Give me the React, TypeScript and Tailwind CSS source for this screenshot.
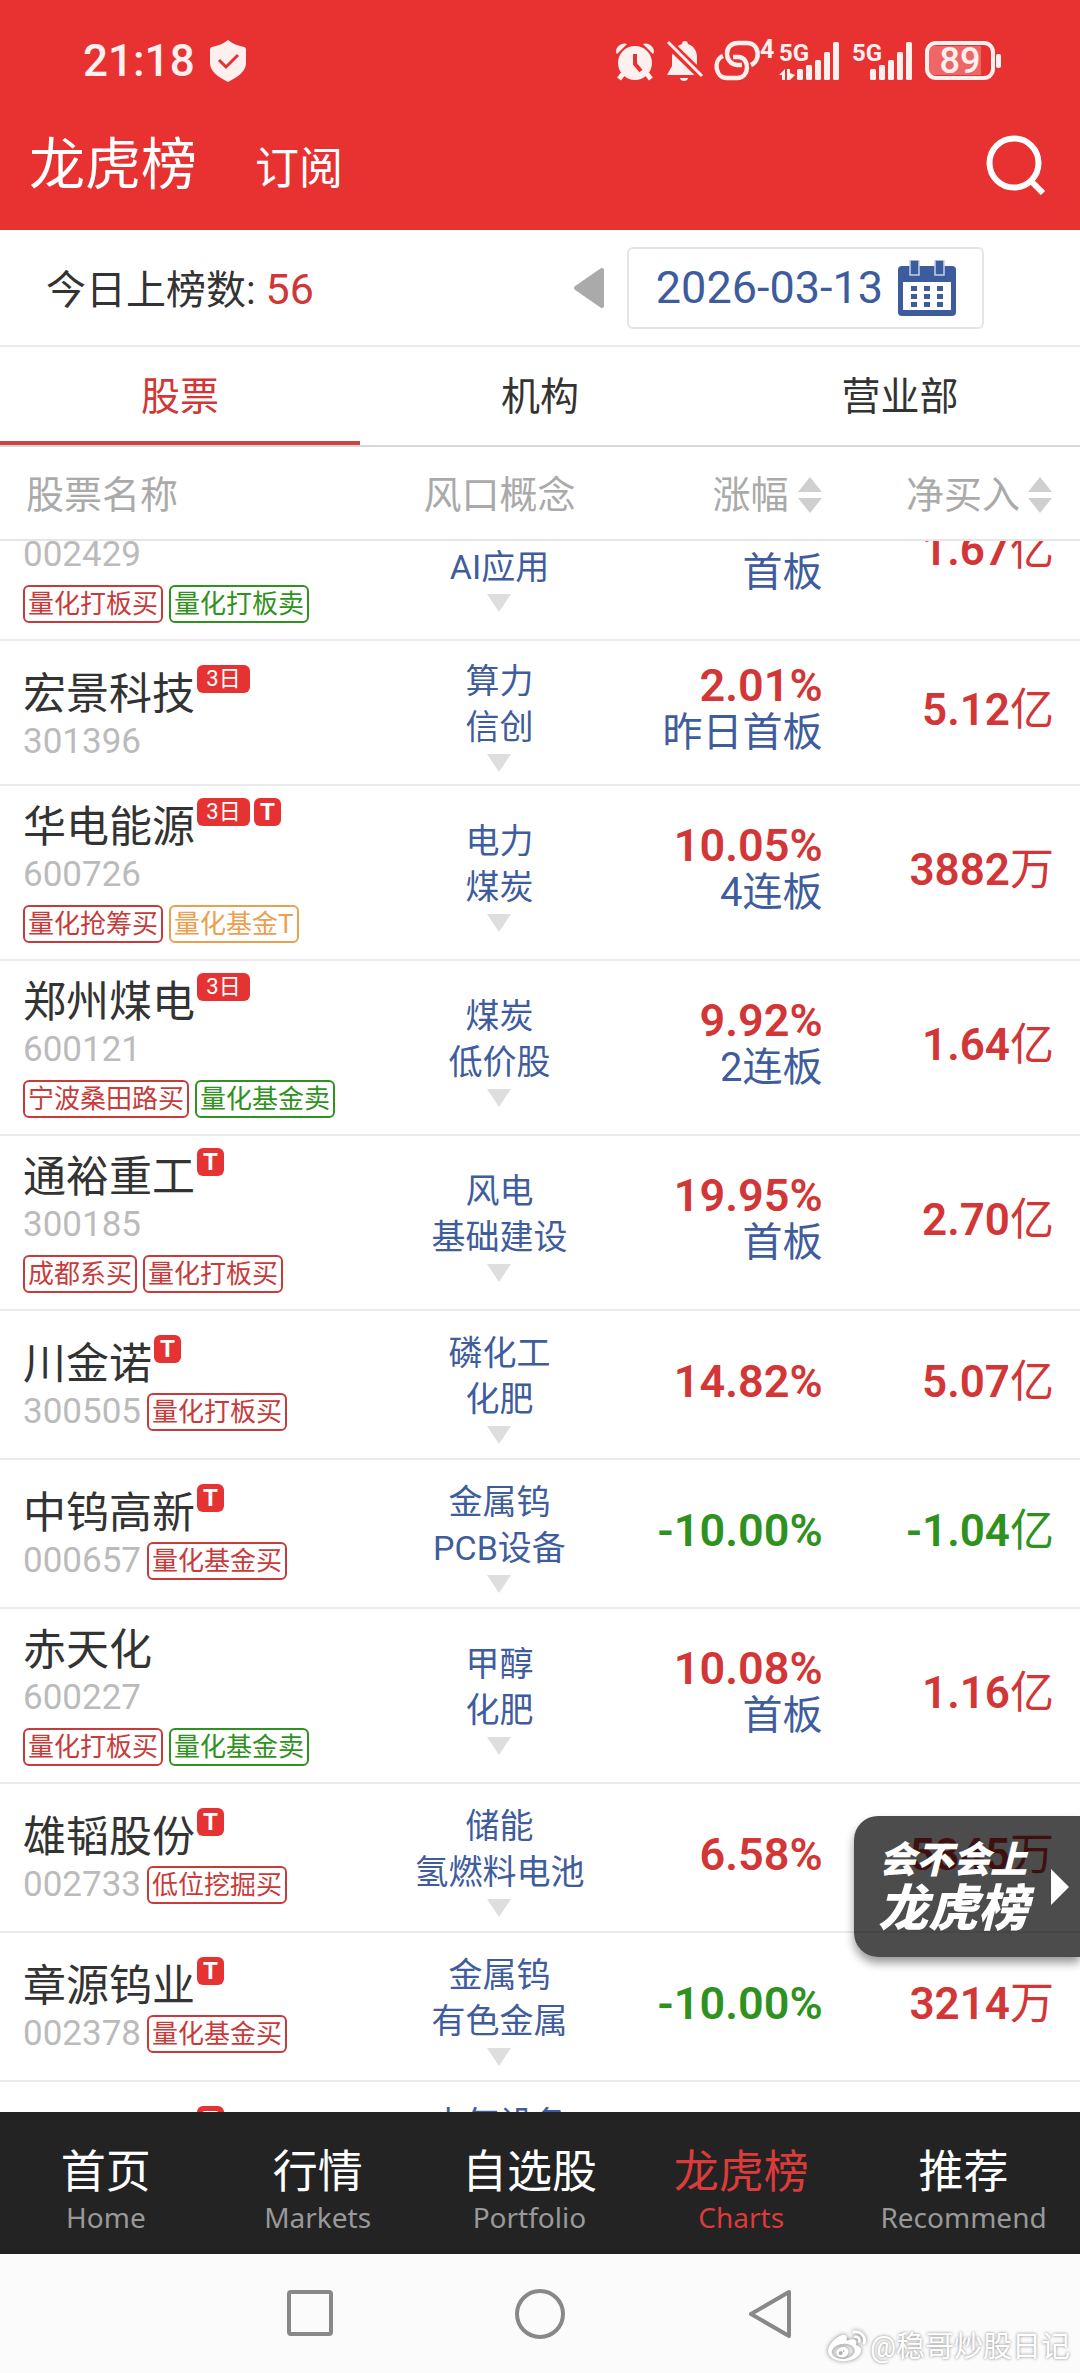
import { useLayoutEffect, useRef, useState } from "react";
import { FaWeibo } from "react-icons/fa";

type Tone = "red" | "green" | "orange";
type Layout = "stacked" | "inline" | "single";

interface Tag {
  text: string;
  tone: Tone;
}

interface Stock {
  name: string;
  code: string;
  badges?: string[];
  tags?: Tag[];
  layout: Layout;
  concepts: string[];
  change: string;
  streak?: string;
  net: [string, string];
}

const red = (text: string): Tag => ({ text, tone: "red" });
const green = (text: string): Tag => ({ text, tone: "green" });
const orange = (text: string): Tag => ({ text, tone: "orange" });

const STOCKS: Stock[] = [
  { name: "兆驰股份", code: "002429", tags: [red("量化打板买"), green("量化打板卖")], layout: "stacked", concepts: ["算力", "AI应用"], change: "10.03%", streak: "首板", net: ["1.67", "亿"] },
  { name: "宏景科技", code: "301396", badges: ["3日"], layout: "single", concepts: ["算力", "信创"], change: "2.01%", streak: "昨日首板", net: ["5.12", "亿"] },
  { name: "华电能源", code: "600726", badges: ["3日", "T"], tags: [red("量化抢筹买"), orange("量化基金T")], layout: "stacked", concepts: ["电力", "煤炭"], change: "10.05%", streak: "4连板", net: ["3882", "万"] },
  { name: "郑州煤电", code: "600121", badges: ["3日"], tags: [red("宁波桑田路买"), green("量化基金卖")], layout: "stacked", concepts: ["煤炭", "低价股"], change: "9.92%", streak: "2连板", net: ["1.64", "亿"] },
  { name: "通裕重工", code: "300185", badges: ["T"], tags: [red("成都系买"), red("量化打板买")], layout: "stacked", concepts: ["风电", "基础建设"], change: "19.95%", streak: "首板", net: ["2.70", "亿"] },
  { name: "川金诺", code: "300505", badges: ["T"], tags: [red("量化打板买")], layout: "inline", concepts: ["磷化工", "化肥"], change: "14.82%", net: ["5.07", "亿"] },
  { name: "中钨高新", code: "000657", badges: ["T"], tags: [red("量化基金买")], layout: "inline", concepts: ["金属钨", "PCB设备"], change: "-10.00%", net: ["-1.04", "亿"] },
  { name: "赤天化", code: "600227", tags: [red("量化打板买"), green("量化基金卖")], layout: "stacked", concepts: ["甲醇", "化肥"], change: "10.08%", streak: "首板", net: ["1.16", "亿"] },
  { name: "雄韬股份", code: "002733", badges: ["T"], tags: [red("低位挖掘买")], layout: "inline", concepts: ["储能", "氢燃料电池"], change: "6.58%", net: ["5845", "万"] },
  { name: "章源钨业", code: "002378", badges: ["T"], tags: [red("量化基金买")], layout: "inline", concepts: ["金属钨", "有色金属"], change: "-10.00%", net: ["3214", "万"] },
  { name: "三变科技", code: "002112", badges: ["T"], tags: [red("量化基金买")], layout: "inline", concepts: ["电气设备", "储能"], change: "10.00%", net: ["1.02", "亿"] },
];

const TONES: Record<Tone, string> = {
  red: "border-[#c93a3a] text-[#c93a3a]",
  green: "border-[#2f9220] text-[#2f9220]",
  orange: "border-[#eb9f4f] text-[#eb9f4f]",
};

const NAME_CELL: Record<Layout, string> = {
  stacked: "pt-3 pb-4",
  inline: "pt-6 pb-6",
  single: "pt-6 pb-5",
};

const NAV = [
  { zh: "首页", en: "Home" },
  { zh: "行情", en: "Markets" },
  { zh: "自选股", en: "Portfolio" },
  { zh: "龙虎榜", en: "Charts" },
  { zh: "推荐", en: "Recommend" },
];

const SCROLLED = 75;

function Signal({ data }: { data: boolean }) {
  return (
    <svg className="overflow-visible" width="62" height="40" viewBox="0 0 62 40" fill="currentColor" aria-hidden="true">
      <text x="0" y="20" fontSize="24" fontWeight="700" fontFamily="Roboto, sans-serif">5G</text>
      {data && <path d="M0 34l6-6v11H3v-5zM8 28h3v4l5 2-5 5H8z" />}
      {[[18, 28], [27, 24], [36, 19], [45, 11], [54, 1]].map(([x, y]) => (
        <rect key={x} x={x} y={y} width="6" height={39 - y} rx="1.5" />
      ))}
    </svg>
  );
}

function StatusBar() {
  return (
    <div className="flex h-[82px] items-end justify-between pr-[79px] pl-[83px] text-[#fff0f0]">
      <div className="flex items-center gap-[14px]">
        <span className="text-[44px] leading-10 font-medium">21:18</span>
        <svg width="38" height="42" viewBox="0 0 38 42" aria-hidden="true">
          <path d="M19 0c5 4 11 6 16 7 1 0 2 1 2 3v13c0 8-8 14-18 19C9 37 1 31 1 23V10c0-2 1-3 2-3 5-1 11-3 16-7z" fill="currentColor" />
          <path d="M10 20l7 7 12-12" fill="none" stroke="#e83232" strokeWidth="3" />
        </svg>
      </div>
      <div className="flex items-center">
        <svg className="mr-[11px]" width="40" height="40" viewBox="0 0 40 40" fill="currentColor" aria-hidden="true">
          <path d="M1 11C1 5 7 1 12 3L2 13zM39 11C39 5 33 1 28 3l10 10z" />
          <circle cx="20" cy="22" r="17" />
          <path d="M8 33l-4 5M32 33l4 5" stroke="currentColor" strokeWidth="5" />
          <path d="M20 13v10l6 7" fill="none" stroke="#e83232" strokeWidth="4" />
        </svg>
        <svg className="mr-[10px]" width="38" height="42" viewBox="0 0 38 42" fill="currentColor" aria-hidden="true">
          <path d="M16 4c0-4 6-4 6 0 6 2 9 7 9 14v8l4 9H1l5-9v-8c0-7 4-12 10-14zM14 38h8c0 4-8 4-8 0z" />
          <path d="M0 1l38 37" stroke="#e83232" strokeWidth="9" />
          <path d="M2 2l34 34" stroke="currentColor" strokeWidth="3" />
        </svg>
        <svg className="mr-[3px] overflow-visible" width="62" height="42" viewBox="0 0 62 42" fill="none" stroke="currentColor" strokeWidth="4.5" aria-hidden="true">
          <path d="M9 16C-1 20 1 38 13 38h10c13 0 13-20 2-21h-6" />
          <path d="M28 25h-5C10 24 9 3 24 3h9c13 0 14 18 4 22" />
          <text x="46" y="18" fontSize="25" fontWeight="700" fill="currentColor" stroke="none" fontFamily="Roboto, sans-serif">4</text>
        </svg>
        <Signal data />
        <div className="ml-[11px]"><Signal data={false} /></div>
        <svg className="ml-[11px]" width="76" height="40" viewBox="0 0 76 40" aria-hidden="true">
          <rect x="2" y="2" width="66" height="35" rx="9" fill="none" stroke="currentColor" strokeWidth="4" />
          <path d="M10 5h46v29H10c-4 0-6-2-6-6V11c0-4 2-6 6-6z" fill="currentColor" opacity=".28" />
          <rect x="71" y="13" width="5" height="14" rx="2" fill="currentColor" />
          <text x="35" y="32" fontSize="36" fontWeight="500" textAnchor="middle" fill="currentColor" fontFamily="Roboto, sans-serif">89</text>
        </svg>
      </div>
    </div>
  );
}

function CalendarIcon() {
  return (
    <svg width="58" height="56" viewBox="0 0 58 56" aria-hidden="true">
      <rect y="6" width="58" height="50" rx="4" fill="#3d5c9e" />
      <rect x="5" y="22" width="48" height="28" fill="#fff" />
      <path d="M12 0h9v15h-9zM37 0h9v15h-9z" fill="#3d5c9e" stroke="#c5d0e8" strokeWidth="1.5" />
      {[26, 34, 42].map((y) =>
        [13, 26, 39].map((x) => <rect key={`${x}-${y}`} x={x} y={y} width="6" height="5" fill="#3d5c9e" />)
      )}
    </svg>
  );
}

function SortIcon() {
  return (
    <svg width="24" height="36" viewBox="0 0 24 36" fill="#cfcfcf" aria-hidden="true">
      <path d="M12 0l12 15H0zM12 36l12-15H0z" />
    </svg>
  );
}

const GRID = "grid grid-cols-[68fr_49fr_37fr_46fr]";
const toneOf = (value: string) => (value.startsWith("-") ? "text-[#2f9220]" : "text-[#d23636]");

function StockRow({ stock }: { stock: Stock }) {
  const tags = (
    <div className="flex gap-[6px]">
      {stock.tags?.map((tag) => (
        <span key={tag.text} className={`rounded-md border-2 px-[3px] text-[26px] leading-[34px] whitespace-nowrap ${TONES[tag.tone]}`}>
          {tag.text}
        </span>
      ))}
    </div>
  );
  return (
    <tr className={`${GRID} border-b-2 border-[#ebebeb]`}>
      <td className={`pl-[23px] ${NAME_CELL[stock.layout]}`}>
        <div className="flex items-start">
          <span className="mt-1 text-[43px] leading-[50px] whitespace-nowrap text-[#333]">{stock.name}</span>
          {stock.badges?.map((badge) => (
            <span
              key={badge}
              className={`mx-[2px] h-7 rounded-md bg-[#e53333] text-center leading-7 text-white ${badge === "T" ? "w-[27px] text-[24px] font-bold" : "w-[53px] text-[22px]"}`}
            >
              {badge}
            </span>
          ))}
        </div>
        <div className="flex items-center gap-[6px]">
          <span className="text-[35px] leading-[45px] text-[#bbb]">{stock.code}</span>
          {stock.layout === "inline" && tags}
        </div>
        {stock.layout === "stacked" && <div className="mt-2">{tags}</div>}
      </td>
      <td className="flex flex-col items-center justify-center pt-1 text-[34px] leading-[46px] text-[#3f5d9d]">
        {stock.concepts.map((concept) => (
          <div key={concept}>{concept}</div>
        ))}
        <svg className="mt-1" width="24" height="18" viewBox="0 0 24 18" fill="#dedede" aria-hidden="true">
          <path d="M0 0h24L12 18z" />
        </svg>
      </td>
      <td className="flex flex-col items-end justify-center pr-[9px] pb-[6px]">
        <div className={`text-[45px] leading-[46px] font-semibold ${toneOf(stock.change)}`}>{stock.change}</div>
        {stock.streak && <div className="text-[40px] leading-[48px] whitespace-nowrap text-[#3f5d9d]">{stock.streak}</div>}
      </td>
      <td className={`flex items-center justify-end pr-[26px] pb-[6px] text-[44px] leading-[46px] whitespace-nowrap ${toneOf(stock.net[0])}`}>
        <span className="font-semibold">{stock.net[0]}</span>
        {stock.net[1]}
      </td>
    </tr>
  );
}

export default function App() {
  const list = useRef<HTMLTableSectionElement>(null);
  const [tab, setTab] = useState("股票");

  useLayoutEffect(() => {
    if (list.current) list.current.scrollTop = SCROLLED;
  }, []);

  return (
    <div className="relative flex h-screen flex-col overflow-hidden bg-white font-[Roboto,'Noto_Sans_CJK_SC',sans-serif]">
      <header className="bg-[#e83232]">
        <StatusBar />
        <div className="flex h-[148px] items-center justify-between pt-[18px] pr-[34px] pl-[29px] text-white">
          <div className="flex items-baseline gap-[58px]">
            <h1 className="text-[56px] leading-[72px]">龙虎榜</h1>
            <button className="pt-1 text-[44px] leading-[60px]">订阅</button>
          </div>
          <button aria-label="搜索">
            <svg width="60" height="60" viewBox="0 0 60 60" fill="none" stroke="#fff" strokeWidth="6" aria-hidden="true">
              <circle cx="28" cy="28" r="24.5" />
              <path d="M45 46l12 12" />
            </svg>
          </button>
        </div>
      </header>

      <div className="flex items-center justify-between border-b-2 border-[#ebebeb] pt-[17px] pb-4 pr-24 pl-[46px]">
        <p className="pt-1 text-[40px] leading-[56px] text-[#333]">
          今日上榜数: <span className="text-[43px] text-[#d23636]">56</span>
        </p>
        <div className="flex items-center gap-[22px]">
          <button aria-label="前一天">
            <svg width="32" height="42" viewBox="0 0 32 42" fill="#aaa" stroke="#aaa" strokeWidth="4" strokeLinejoin="round" aria-hidden="true">
              <path d="M29 3v36L3 21z" />
            </svg>
          </button>
          <button className="flex h-[82px] items-center gap-[15px] rounded-md border-2 border-[#e5e5e5] pr-[26px] pl-[27px] text-[45px] text-[#3d5c9e]">
            2026-03-13
            <CalendarIcon />
          </button>
        </div>
      </div>

      <div role="tablist" className="grid grid-cols-3 border-b-2 border-[#d8d8d8] text-[39px] leading-[58px]">
        {["股票", "机构", "营业部"].map((name) => (
          <button
            key={name}
            role="tab"
            aria-selected={tab === name}
            onClick={() => setTab(name)}
            className={`border-b-4 pt-[21px] pb-[15px] ${tab === name ? "border-[#cc4444] text-[#d23636]" : "border-transparent text-[#333]"}`}
          >
            {name}
          </button>
        ))}
      </div>

      <table className="flex min-h-0 flex-1 flex-col">
        <thead className="block text-[38px] leading-[48px] text-[#aaa]">
          <tr className={`${GRID} border-b-2 border-[#e6e6e6] pt-6 pb-5`}>
            <th className="pl-[26px] text-left font-normal">股票名称</th>
            <th className="font-normal">风口概念</th>
            <th className="pr-[10px] font-normal">
              <button className="ml-auto flex items-center gap-[9px]">涨幅<SortIcon /></button>
            </th>
            <th className="pr-7 font-normal">
              <button className="ml-auto flex items-center gap-2">净买入<SortIcon /></button>
            </th>
          </tr>
        </thead>
        <tbody ref={list} className="block min-h-0 flex-1 overflow-y-auto [scrollbar-width:none]">
          {STOCKS.map((stock) => (
            <StockRow key={stock.code} stock={stock} />
          ))}
        </tbody>
      </table>

      <nav className="grid grid-cols-[1fr_1fr_1fr_1fr_1.1fr] bg-[#232323] pt-[35px] pb-[19px]">
        {NAV.map(({ zh, en }) => (
          <a key={en} href={`#${en.toLowerCase()}`} className={`flex flex-col items-center ${zh === "龙虎榜" ? "text-[#dc3b3b]" : "text-white"}`}>
            <span className="text-[45px] leading-[52px]">{zh}</span>
            <span className={`font-['Noto_Sans',sans-serif] text-[28px] leading-9 ${zh === "龙虎榜" ? "text-[#dc3b3b]" : "text-[#999]"}`}>{en}</span>
          </a>
        ))}
      </nav>

      <div className="flex h-[119px] items-center justify-center gap-[182px] bg-[#fbfbfb]">
        <button aria-label="最近任务">
          <svg width="46" height="50" viewBox="0 0 46 50" fill="none" stroke="#888" strokeWidth="4" aria-hidden="true">
            <rect x="2" y="3" width="42" height="42" rx="2" />
          </svg>
        </button>
        <button aria-label="主屏幕">
          <svg width="50" height="50" viewBox="0 0 50 50" fill="none" stroke="#888" strokeWidth="4" aria-hidden="true">
            <circle cx="25" cy="25" r="23" />
          </svg>
        </button>
        <button aria-label="返回">
          <svg width="46" height="50" viewBox="0 0 46 50" fill="none" stroke="#888" strokeWidth="4" strokeLinejoin="round" aria-hidden="true">
            <path d="M42 3v44L4 25z" />
          </svg>
        </button>
      </div>

      <button className="absolute right-0 bottom-[416px] flex h-[141px] items-center gap-[23px] rounded-l-[24px] bg-black/70 pr-[11px] pl-[24px] text-white shadow-[0_6px_10px_rgba(0,0,0,0.4)]">
        <span className="flex flex-col pb-[6px] font-['Noto_Sans_CJK_SC',sans-serif] font-black italic">
          <span className="text-[37px] leading-10">会不会上</span>
          <span className="text-[50px] leading-[54px]">龙虎榜</span>
        </span>
        <svg width="18" height="36" viewBox="0 0 18 36" fill="#fff" aria-hidden="true">
          <path d="M0 0l18 18L0 36z" />
        </svg>
      </button>

      <div className="absolute right-[10px] bottom-1 flex items-center gap-1 text-[29px] leading-[44px] text-white [text-shadow:0_0_3px_rgba(0,0,0,0.5)]">
        <FaWeibo className="size-[38px] [filter:drop-shadow(0_0_2px_rgba(0,0,0,0.5))]" aria-hidden="true" />
        @稳哥炒股日记
      </div>
    </div>
  );
}
